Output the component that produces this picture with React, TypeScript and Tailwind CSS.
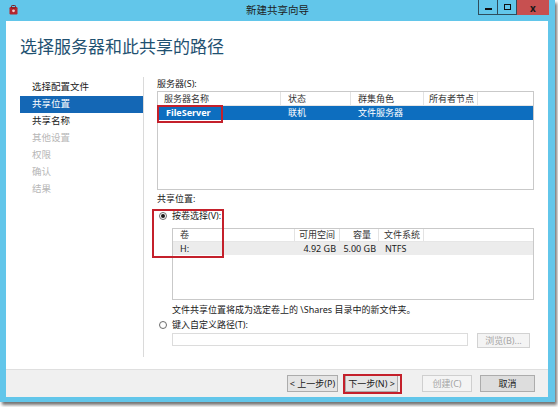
import React from "react";

const FONT = { fontFamily: '"Noto Sans", "Noto Sans CJK SC", sans-serif' };

const navItems = [
	{ label: "选择配置文件", state: "done" },
	{ label: "共享位置", state: "active" },
	{ label: "共享名称", state: "done" },
	{ label: "其他设置", state: "off" },
	{ label: "权限", state: "off" },
	{ label: "确认", state: "off" },
	{ label: "结果", state: "off" },
];

function Radio({ checked }: { checked?: boolean }) {
	return (
		<span className="ml-[2px] mr-[5px] flex h-[8px] w-[8px] items-center justify-center rounded-full border border-[#6b6b6b] bg-white">
			{checked && <span className="h-[4px] w-[4px] rounded-full bg-[#1a1a1a]" />}
		</span>
	);
}

function Btn({
	children,
	w,
	disabled,
	dark,
}: {
	children: React.ReactNode;
	w: string;
	disabled?: boolean;
	dark?: boolean;
}) {
	return (
		<div
			className={`flex h-[17px] items-center justify-center border text-[9px] ${w} ${
				disabled
					? "border-[#cfcfcf] bg-[#f4f4f4] text-[#a3a3a3]"
					: dark
						? "border-[#acacac] bg-[#dddddd] text-[#1a1a1a]"
						: "border-[#acacac] bg-[#e5e5e5] text-[#1a1a1a]"
			}`}
		>
			{children}
		</div>
	);
}

export default function App() {
	return (
		<div className="relative h-[407px] w-[558px] overflow-hidden bg-white" style={FONT}>
			<div className="flex h-[402px] w-[555px] flex-col bg-[#62c6ea] shadow-[2px_3px_3px_rgba(0,0,0,0.55)]">
				{/* title bar */}
				<div className="relative flex h-[21px] shrink-0 items-center justify-center">
					<svg className="absolute left-[9px] top-[5px]" width="9" height="10" viewBox="0 0 9 10">
						<rect x="0.5" y="2" width="8" height="7.5" rx="1.2" fill="#b3262d" />
						<rect x="2.5" y="0.5" width="4" height="2.5" rx="0.8" fill="none" stroke="#7a1a1f" strokeWidth="1" />
						<circle cx="4.5" cy="5.8" r="1.4" fill="#f3c9cb" />
					</svg>
					<span className="text-[10.5px] text-[#1d1d1d]">新建共享向导</span>
					<div className="absolute right-[6px] top-0 flex h-[15px]">
						<div className="flex w-[20px] items-center justify-center border border-t-0 border-[#2f4d5c]">
							<span className="mt-[3px] h-[2px] w-[7px] bg-[#111]" />
						</div>
						<div className="flex w-[19px] items-center justify-center border border-l-0 border-t-0 border-[#2f4d5c]">
							<span className="h-[6px] w-[7px] border-[1.5px] border-[#111]" />
						</div>
						<div className="flex w-[32px] items-center justify-center bg-[#c75050] text-[10px] font-bold leading-none text-[#1a1a1a]">
							x
						</div>
					</div>
				</div>

				{/* client */}
				<div className="mb-[5px] ml-[6px] mr-[7px] flex flex-1 flex-col bg-white">
					<div className="h-[53px] shrink-0 pl-[14px] pt-[15px] text-[17px] leading-[22px] text-[#1f5171]">
						选择服务器和此共享的路径
					</div>

					<div className="flex h-[295px] shrink-0">
						{/* nav */}
						<div className="w-[137px] pl-[14px] pt-[5px]">
							{navItems.map((n) => (
								<div
									key={n.label}
									className={`flex h-[17px] items-center pl-[12px] text-[9.5px] ${
										n.state === "active"
											? "bg-[#1467b5] text-white"
											: n.state === "off"
												? "text-[#b7b7b7]"
												: "text-[#1a1a1a]"
									}`}
								>
									{n.label}
								</div>
							))}
						</div>
						<div className="mb-[12px] mt-[3px] w-px bg-[#dadada]" />

						{/* content */}
						<div className="flex flex-1 flex-col pl-[13px] pr-[14px] pt-[4px] text-[9px] text-[#1a1a1a]">
							<div className="h-[12px] leading-[12px]">服务器(S):</div>
							<div className="mt-[1px] h-[99px] border border-[#c9c9c9]">
								<div className="flex h-[14px] border-b border-[#e6e6e6] text-[#333]">
									<div className="flex w-[123px] items-center border-r border-[#e3e3e3] pl-[6px]">服务器名称</div>
									<div className="flex w-[70px] items-center border-r border-[#e3e3e3] pl-[7px]">状态</div>
									<div className="flex w-[73px] items-center border-r border-[#e3e3e3] pl-[7px]">群集角色</div>
									<div className="flex w-[54px] items-center border-r border-[#e3e3e3] pl-[5px]">所有者节点</div>
								</div>
								<div className="flex h-[14px] bg-[#0d6ebf] text-white">
									<div className="flex w-[123px] items-center pl-[8px] font-bold">FileServer</div>
									<div className="flex w-[70px] items-center pl-[7px]">联机</div>
									<div className="flex w-[73px] items-center pl-[7px]">文件服务器</div>
								</div>
							</div>

							<div className="mt-[3px] h-[12px] leading-[12px]">共享位置:</div>
							<div className="mt-[5px] flex h-[12px] items-center">
								<Radio checked />
								<span>按卷选择(V):</span>
							</div>
							<div className="ml-[15px] mt-[6px] h-[72px] border border-[#c9c9c9]">
								<div className="flex h-[13px] border-b border-[#e6e6e6] text-[#333]">
									<div className="flex w-[122px] items-center border-r border-[#e3e3e3] pl-[7px]">卷</div>
									<div className="flex w-[45px] items-center justify-end border-r border-[#e3e3e3] pr-[4px]">可用空间</div>
									<div className="flex w-[39px] items-center justify-end border-r border-[#e3e3e3] pr-[7px]">容量</div>
									<div className="flex w-[45px] items-center border-r border-[#e3e3e3] pl-[5px]">文件系统</div>
								</div>
								<div className="flex h-[13px] bg-[#ececec]">
									<div className="flex w-[122px] items-center pl-[7px]">H:</div>
									<div className="flex w-[45px] items-center justify-end pr-[4px]">4.92 GB</div>
									<div className="flex w-[39px] items-center justify-end pr-[3px]">5.00 GB</div>
									<div className="flex w-[45px] items-center pl-[6px]">NTFS</div>
								</div>
							</div>

							<div className="ml-[15px] mt-[4px] h-[12px] leading-[12px]">
								文件共享位置将成为选定卷上的 \Shares 目录中的新文件夹。
							</div>
							<div className="mt-[3px] flex h-[12px] items-center">
								<Radio />
								<span>键入自定义路径(T):</span>
							</div>
							<div className="ml-[15px] mt-[2px] flex items-start">
								<div className="h-[13px] w-[296px] border border-[#dcdcdc] bg-white" />
								<div className="ml-[9px] flex h-[15px] w-[53px] items-center justify-center border border-[#d2d2d2] bg-[#f4f4f4] text-[#a5a5a5]">
									浏览(B)...
								</div>
							</div>
						</div>
					</div>

					<div className="h-px shrink-0 bg-[#dfdfdf]" />
					<div className="flex flex-1 items-center justify-end bg-[#f0f0f0] pr-[13px]">
						<Btn w="w-[51px]">&lt; 上一步(P)</Btn>
						<div className="w-[7px]" />
						<Btn w="w-[53px]">下一步(N) &gt;</Btn>
						<div className="w-[24px]" />
						<Btn w="w-[50px]" disabled>
							创建(C)
						</Btn>
						<div className="w-[8px]" />
						<Btn w="w-[55px]" dark>
							取消
						</Btn>
					</div>
				</div>
			</div>

			{/* red annotation boxes */}
			<div className="absolute left-[157px] top-[105px] h-[18px] w-[66px] border-2 border-[#c4202b]" />
			<div className="absolute left-[152px] top-[209px] h-[49px] w-[72px] border-2 border-[#c4202b]" />
			<div className="absolute left-[343px] top-[374px] h-[20px] w-[59px] border-2 border-[#c4202b]" />
		</div>
	);
}
